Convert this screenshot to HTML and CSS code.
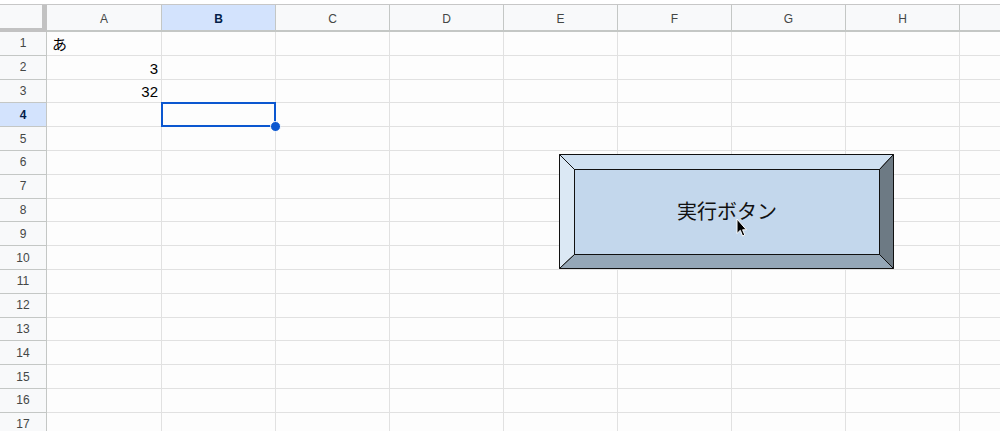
FILE: index.html
```html
<!DOCTYPE html>
<html lang="ja">
<head>
<meta charset="utf-8">
<title>Sheet</title>
<link rel="stylesheet" href="styles.css">
</head>
<body>
<div class="sheet">
  <div class="hdr">
    <div class="corner"></div>
    <div class="ch a">A</div>
    <div class="ch sel">B</div>
    <div class="ch">C</div>
    <div class="ch">D</div>
    <div class="ch">E</div>
    <div class="ch">F</div>
    <div class="ch">G</div>
    <div class="ch">H</div>
    <div class="ch"></div>
  </div>
  <div class="row"><div class="rh">1</div><div class="c a left">あ</div><div class="c"></div><div class="c"></div><div class="c"></div><div class="c"></div><div class="c"></div><div class="c"></div><div class="c"></div><div class="c"></div></div>
  <div class="row"><div class="rh">2</div><div class="c a num">3</div><div class="c"></div><div class="c"></div><div class="c"></div><div class="c"></div><div class="c"></div><div class="c"></div><div class="c"></div><div class="c"></div></div>
  <div class="row"><div class="rh">3</div><div class="c a num">32</div><div class="c"></div><div class="c"></div><div class="c"></div><div class="c"></div><div class="c"></div><div class="c"></div><div class="c"></div><div class="c"></div></div>
  <div class="row"><div class="rh sel">4</div><div class="c a"></div><div class="c active"><span class="selbox"></span><span class="handle"></span></div><div class="c"></div><div class="c"></div><div class="c"></div><div class="c"></div><div class="c"></div><div class="c"></div><div class="c"></div></div>
  <div class="row"><div class="rh">5</div><div class="c a"></div><div class="c"></div><div class="c"></div><div class="c"></div><div class="c"></div><div class="c"></div><div class="c"></div><div class="c"></div><div class="c"></div></div>
  <div class="row"><div class="rh">6</div><div class="c a"></div><div class="c"></div><div class="c"></div><div class="c"></div><div class="c"></div><div class="c"></div><div class="c"></div><div class="c"></div><div class="c"></div></div>
  <div class="row"><div class="rh">7</div><div class="c a"></div><div class="c"></div><div class="c"></div><div class="c"></div><div class="c"></div><div class="c"></div><div class="c"></div><div class="c"></div><div class="c"></div></div>
  <div class="row"><div class="rh">8</div><div class="c a"></div><div class="c"></div><div class="c"></div><div class="c"></div><div class="c"></div><div class="c"></div><div class="c"></div><div class="c"></div><div class="c"></div></div>
  <div class="row"><div class="rh">9</div><div class="c a"></div><div class="c"></div><div class="c"></div><div class="c"></div><div class="c"></div><div class="c"></div><div class="c"></div><div class="c"></div><div class="c"></div></div>
  <div class="row"><div class="rh">10</div><div class="c a"></div><div class="c"></div><div class="c"></div><div class="c"></div><div class="c"></div><div class="c"></div><div class="c"></div><div class="c"></div><div class="c"></div></div>
  <div class="row"><div class="rh">11</div><div class="c a"></div><div class="c"></div><div class="c"></div><div class="c"></div><div class="c"></div><div class="c"></div><div class="c"></div><div class="c"></div><div class="c"></div></div>
  <div class="row"><div class="rh">12</div><div class="c a"></div><div class="c"></div><div class="c"></div><div class="c"></div><div class="c"></div><div class="c"></div><div class="c"></div><div class="c"></div><div class="c"></div></div>
  <div class="row"><div class="rh">13</div><div class="c a"></div><div class="c"></div><div class="c"></div><div class="c"></div><div class="c"></div><div class="c"></div><div class="c"></div><div class="c"></div><div class="c"></div></div>
  <div class="row"><div class="rh">14</div><div class="c a"></div><div class="c"></div><div class="c"></div><div class="c"></div><div class="c"></div><div class="c"></div><div class="c"></div><div class="c"></div><div class="c"></div></div>
  <div class="row"><div class="rh">15</div><div class="c a"></div><div class="c"></div><div class="c"></div><div class="c"></div><div class="c"></div><div class="c"></div><div class="c"></div><div class="c"></div><div class="c"></div></div>
  <div class="row"><div class="rh">16</div><div class="c a"></div><div class="c"></div><div class="c"></div><div class="c"></div><div class="c"></div><div class="c"></div><div class="c"></div><div class="c"></div><div class="c"></div></div>
  <div class="row"><div class="rh">17</div><div class="c a"></div><div class="c"></div><div class="c"></div><div class="c"></div><div class="c"></div><div class="c"></div><div class="c"></div><div class="c"></div><div class="c"></div></div>

  <svg class="drawing" width="336" height="116" viewBox="0 0 336 116">
    <polygon class="bv-top" points="0.5,0.5 334.5,0.5 320.5,15.5 15.5,15.5"/>
    <polygon class="bv-left" points="0.5,0.5 15.5,15.5 15.5,100.5 0.5,114.5"/>
    <polygon class="bv-right" points="334.5,0.5 334.5,114.5 320.5,100.5 320.5,15.5"/>
    <polygon class="bv-bottom" points="0.5,114.5 15.5,100.5 320.5,100.5 334.5,114.5"/>
    <rect class="bv-face" x="15.5" y="15.5" width="305" height="85"/>
    <text class="bv-label" x="168" y="65" text-anchor="middle">実行ボタン</text>
  </svg>

  <svg class="cursor" width="13" height="21" viewBox="0 0 13 21">
    <path d="M1 1 L1 15.5 L4.3 12.3 L6.6 18 L8.8 17 L6.6 11.8 L10.4 11.8 Z" fill="#000" stroke="#fff" stroke-width="1" stroke-linejoin="round"/>
  </svg>
</div>
</body>
</html>
```

FILE: styles.css
```css
html, body {
  margin: 0;
  padding: 0;
  background: #ffffff;
  overflow: hidden;
}

.sheet {
  position: relative;
  padding-top: 4px;
  box-sizing: border-box;
  width: 1000px;
  height: 431px;
  overflow: hidden;
  font-family: "Liberation Sans", Arial, "Noto Sans CJK JP", sans-serif;
}

.hdr {
  display: flex;
  height: 28px;
  box-sizing: border-box;
  border-top: 1px solid #c7c7c7;
  border-bottom: 2px solid #c4c7c5;
  background: #f8f9fa;
}

.corner {
  width: 47px;
  flex: none;
  box-sizing: border-box;
  border-right: 5px solid #c2c2c2;
  border-bottom: 4px solid #c2c2c2;
  margin-bottom: -2px;
  background: #f8f9fa;
}

.ch {
  width: 114px;
  flex: none;
  box-sizing: border-box;
  border-right: 1px solid #c4c7c5;
  display: flex;
  align-items: center;
  justify-content: center;
  padding-top: 2px;
  font-size: 12px;
  color: #444746;
}

.ch.a { width: 115px; }

.ch:last-child {
  flex: 1 1 auto;
  width: auto;
  border-right: none;
}

.ch.sel {
  background: #d3e3fd;
  color: #041e49;
  font-weight: bold;
}

.row {
  display: flex;
  height: 23.8px;
}

.rh {
  width: 47px;
  flex: none;
  box-sizing: border-box;
  background: #f8f9fa;
  border-right: 1px solid #c4c7c5;
  border-bottom: 1px solid #c4c7c5;
  display: flex;
  align-items: center;
  justify-content: center;
  font-size: 12px;
  color: #444746;
}

.rh.sel {
  background: #d3e3fd;
  color: #041e49;
  font-weight: bold;
}

.c {
  width: 114px;
  flex: none;
  box-sizing: border-box;
  background: #fdfdfd;
  border-right: 1px solid #e1e1e1;
  border-bottom: 1px solid #e1e1e1;
  display: flex;
  align-items: flex-end;
  padding: 0 3px 2px 5px;
  font-size: 15px;
  line-height: 17px;
  color: #000;
}

.c.a { width: 115px; }

.c:last-child {
  flex: 1 1 auto;
  width: auto;
  border-right: none;
}

.c.num { justify-content: flex-end; }

.c.left { justify-content: flex-start; }

.c.active { position: relative; }

.selbox {
  position: absolute;
  left: -1px;
  top: -1px;
  right: -1px;
  bottom: -1px;
  border: 2px solid #0b57d0;
}

.handle {
  position: absolute;
  right: -6px;
  bottom: -6px;
  width: 9px;
  height: 9px;
  border-radius: 50%;
  background: #0b57d0;
  border: 1px solid #ffffff;
}

.drawing {
  position: absolute;
  left: 559px;
  top: 154px;
  overflow: visible;
}

.drawing polygon,
.drawing rect {
  stroke: #111;
  stroke-width: 1;
  stroke-linejoin: miter;
}

.bv-top { fill: #cfe0f1; }
.bv-left { fill: #dbe8f4; }
.bv-right { fill: #6d7a84; }
.bv-bottom { fill: #95a7b7; }
.bv-face { fill: #c3d7ec; }

.bv-label {
  font-family: "Noto Sans CJK JP", "Noto Sans", sans-serif;
  font-size: 20px;
  fill: #111;
}

.cursor {
  position: absolute;
  left: 736px;
  top: 218px;
}
```
